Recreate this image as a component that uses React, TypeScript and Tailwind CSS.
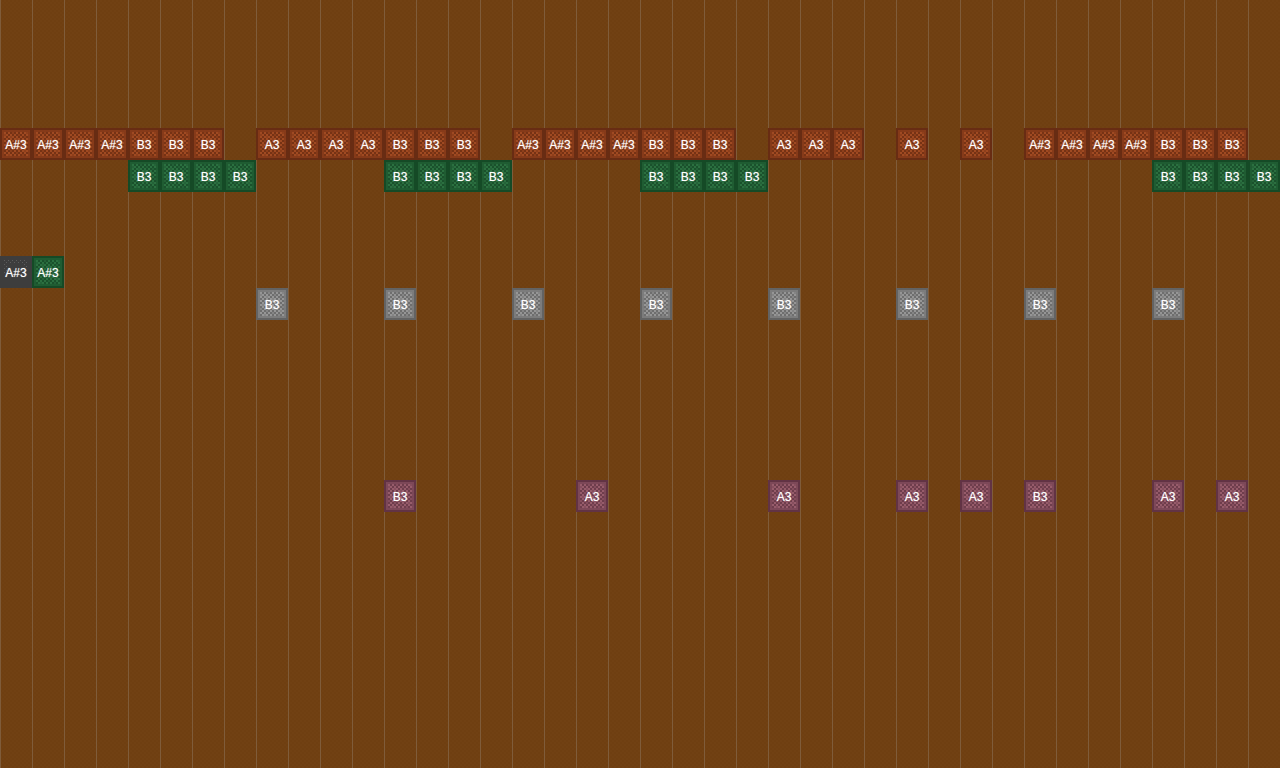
const CELL = 16;

type Tone = { edge: string; band: string; light: string; mid: string; dark: string };

const tones: Record<string, Tone> = {
  red: { edge: "#682c13", band: "#863a19", light: "#a04a22", mid: "#8e3f1b", dark: "#763214" },
  green: { edge: "#154a26", band: "#1f5c32", light: "#2b7040", mid: "#246238", dark: "#1a512c" },
  gray: { edge: "#636363", band: "#7c7c7c", light: "#969696", mid: "#858585", dark: "#6e6e6e" },
  pink: { edge: "#623344", band: "#7d4858", light: "#975c6b", mid: "#864e5e", dark: "#6e3d4c" },
};

const rows: Record<number, { col: number; label: string; kind: string }[]> = {
  4: [
    ...[0, 1, 2, 3].map((col) => ({ col, label: "A#3", kind: "red" })),
    ...[4, 5, 6].map((col) => ({ col, label: "B3", kind: "red" })),
    ...[8, 9, 10, 11].map((col) => ({ col, label: "A3", kind: "red" })),
    ...[12, 13, 14].map((col) => ({ col, label: "B3", kind: "red" })),
    ...[16, 17, 18, 19].map((col) => ({ col, label: "A#3", kind: "red" })),
    ...[20, 21, 22].map((col) => ({ col, label: "B3", kind: "red" })),
    ...[24, 25, 26, 28, 30].map((col) => ({ col, label: "A3", kind: "red" })),
    ...[32, 33, 34, 35].map((col) => ({ col, label: "A#3", kind: "red" })),
    ...[36, 37, 38].map((col) => ({ col, label: "B3", kind: "red" })),
  ],
  5: [4, 5, 6, 7, 12, 13, 14, 15, 20, 21, 22, 23, 36, 37, 38, 39].map((col) => ({ col, label: "B3", kind: "green" })),
  8: [
    { col: 0, label: "A#3", kind: "slate" },
    { col: 1, label: "A#3", kind: "green" },
  ],
  9: [8, 12, 16, 20, 24, 28, 32, 36].map((col) => ({ col, label: "B3", kind: "gray" })),
  15: [
    { col: 12, label: "B3", kind: "pink" },
    { col: 18, label: "A3", kind: "pink" },
    { col: 24, label: "A3", kind: "pink" },
    { col: 28, label: "A3", kind: "pink" },
    { col: 30, label: "A3", kind: "pink" },
    { col: 32, label: "B3", kind: "pink" },
    { col: 36, label: "A3", kind: "pink" },
    { col: 38, label: "A3", kind: "pink" },
  ],
};

// block texture, drawn in 2px pixels
function Texture({ tone }: { tone: Tone }) {
  const pixels = [];
  for (let y = 0; y < CELL; y++) {
    for (let x = 0; x < CELL; x++) {
      const ring = Math.min(x, y, CELL - 1 - x, CELL - 1 - y);
      let fill = tone.edge;
      if (ring === 1) fill = tone.band;
      if (ring > 1) {
        const mottled = (x * 3 + y * 5) % 7 === 0;
        fill = mottled ? tone.mid : (x + y) % 2 === 0 ? tone.light : tone.dark;
      }
      pixels.push(<rect key={`${x}-${y}`} x={x} y={y} width="1" height="1" fill={fill} />);
    }
  }
  return (
    <svg viewBox="0 0 16 16" shapeRendering="crispEdges" className="absolute inset-0 w-full h-full">
      {pixels}
    </svg>
  );
}

// the dark block only has a faint speckle along its top half
function Speckle() {
  const dots = [];
  for (let y = 2; y < 10; y++) {
    for (let x = 2; x < 14; x++) {
      const ring = Math.min(x - 2, y - 2, 13 - x);
      if (ring < 2 && (x + y) % 2 === 0) {
        dots.push(<rect key={`${x}-${y}`} x={x} y={y} width="0.5" height="0.5" fill="#5c5c5c" />);
      }
    }
  }
  return (
    <svg viewBox="0 0 16 16" shapeRendering="crispEdges" className="absolute inset-0 w-full h-full">
      {dots}
    </svg>
  );
}

function Note({ label, kind }: { label: string; kind: string }) {
  return (
    <div className={`relative h-8 w-8 flex items-center justify-center ${kind === "slate" ? "bg-[#3d3d3d]" : ""}`}>
      {kind === "slate" ? <Speckle /> : <Texture tone={tones[kind]} />}
      <span className="relative mt-px text-[12px] leading-none text-white [text-shadow:0_0_1px_rgba(255,255,255,0.6)]">{label}</span>
    </div>
  );
}

export default function App() {
  return (
    <div className="h-[768px] w-[1280px] overflow-hidden bg-[#704012] bg-[linear-gradient(to_right,#7f5c3a_1px,transparent_1px),repeating-conic-gradient(#6f3f11_0_25%,#714113_0_50%)] bg-[length:32px_32px,4px_4px] font-['Liberation_Sans',Arial,sans-serif]">
      {Array.from({ length: 24 }, (_, r) => (
        <div key={r} className="flex h-8">
          {Array.from({ length: 40 }, (_, c) => {
            const note = rows[r]?.find((n) => n.col === c);
            return (
              <div key={c} className="h-8 w-8 shrink-0">
                {note && <Note label={note.label} kind={note.kind} />}
              </div>
            );
          })}
        </div>
      ))}
    </div>
  );
}
